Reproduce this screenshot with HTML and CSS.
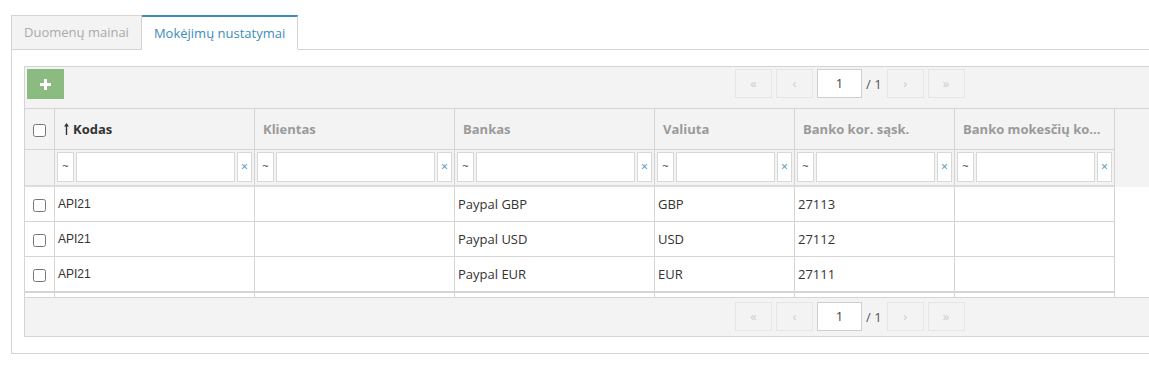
FILE: index.html
```html
<!DOCTYPE html>
<html lang="lt">
<head>
  <meta charset="UTF-8" />
  <title>Mokėjimų nustatymai</title>
  <link rel="stylesheet" href="styles.css">
</head>
<body>
  <div class="page">
    <ul class="tabs">
      <li class="tab">Duomenų mainai</li>
      <li class="tab active">Mokėjimų nustatymai</li>
    </ul>

    <div class="panel">
      <div class="grid">
        <div class="toolbar">
          <button class="btn-add"><svg width="11" height="11" viewBox="0 0 11 11"><path d="M4 0h3v4h4v3H7v4H4V7H0V4h4z" fill="#fff"/></svg></button>
          <div class="pager">
            <span class="pg-btn">&laquo;</span>
            <span class="pg-btn">&lsaquo;</span>
            <span class="pg-input">1</span>
            <span class="pg-total">/ 1</span>
            <span class="pg-btn">&rsaquo;</span>
            <span class="pg-btn">&raquo;</span>
          </div>
        </div>

        <div class="grid-head">
          <table class="tbl">
            <colgroup>
              <col style="width:30px"><col style="width:200px"><col style="width:200px"><col style="width:200px">
              <col style="width:140px"><col style="width:160px"><col style="width:160px">
            </colgroup>
            <tr class="hdr">
              <th class="chk"><input type="checkbox"></th>
              <th class="sorted"><svg class="arrow" width="5" height="12" viewBox="0 0 5 12"><path d="M2.5 0L5 3.5H3.2V12H1.8V3.5H0z" fill="#333"/></svg>Kodas</th>
              <th>Klientas</th>
              <th>Bankas</th>
              <th>Valiuta</th>
              <th>Banko kor. sąsk.</th>
              <th>Banko mokesčių ko...</th>
            </tr>
            <tr class="flt">
              <td class="chk"></td>
              <td><div class="fbox"><span class="fop">~</span><span class="finp"></span><span class="fclr">&times;</span></div></td>
              <td><div class="fbox"><span class="fop">~</span><span class="finp"></span><span class="fclr">&times;</span></div></td>
              <td><div class="fbox"><span class="fop">~</span><span class="finp"></span><span class="fclr">&times;</span></div></td>
              <td><div class="fbox"><span class="fop">~</span><span class="finp"></span><span class="fclr">&times;</span></div></td>
              <td><div class="fbox"><span class="fop">~</span><span class="finp"></span><span class="fclr">&times;</span></div></td>
              <td><div class="fbox"><span class="fop">~</span><span class="finp"></span><span class="fclr">&times;</span></div></td>
            </tr>
          </table>
        </div>

        <table class="tbl body">
          <colgroup>
            <col style="width:30px"><col style="width:200px"><col style="width:200px"><col style="width:200px">
            <col style="width:140px"><col style="width:160px"><col style="width:160px">
          </colgroup>
          <tr>
            <td class="chk"><input type="checkbox"></td>
            <td class="code">API21</td><td></td><td>Paypal GBP</td><td>GBP</td><td>27113</td><td></td>
          </tr>
          <tr>
            <td class="chk"><input type="checkbox"></td>
            <td class="code">API21</td><td></td><td>Paypal USD</td><td>USD</td><td>27112</td><td></td>
          </tr>
          <tr class="last">
            <td class="chk"><input type="checkbox"></td>
            <td class="code">API21</td><td></td><td>Paypal EUR</td><td>EUR</td><td>27111</td><td></td>
          </tr>
          <tr class="spacer">
            <td></td><td></td><td></td><td></td><td></td><td></td><td></td>
          </tr>
        </table>

        <div class="footer">
          <div class="pager">
            <span class="pg-btn">&laquo;</span>
            <span class="pg-btn">&lsaquo;</span>
            <span class="pg-input">1</span>
            <span class="pg-total">/ 1</span>
            <span class="pg-btn">&rsaquo;</span>
            <span class="pg-btn">&raquo;</span>
          </div>
        </div>
      </div>
    </div>
  </div>
</body>
</html>
```

FILE: styles.css
```css
body {margin:0; overflow:hidden; background:#fff; font-family:"Open Sans", sans-serif; font-size:13px; color:#333}
.page {padding:15px 0 0 11px; width:1200px}

.tabs {list-style:none; margin:0 0 -1px 0; padding:0; display:flex; position:relative; z-index:1}
.tab {height:33px; line-height:33px; padding:0 12px; border:1px solid #d4d4d4; background:#f3f3f3; color:#aaa}
.tab.active {background:#fff; color:#3c8dbc; border-top:2px solid #3c8dbc; height:32px; line-height:32px; border-left:none; border-bottom-color:#fff}

.panel {border:1px solid #d4d4d4; padding:16px 0 16px 12px}
.grid {border:1px solid #d4d4d4; border-right:none; background:#fff}

.toolbar {background:#f3f3f3; height:42px; padding:2px; display:flex; align-items:flex-start; border-bottom:1px solid #d4d4d4; box-sizing:border-box}
.btn-add {width:37px; height:30px; border:none; background:#8cbb82; padding:0; margin-right:671px; display:flex; align-items:center; justify-content:center}

.pager {display:flex; align-items:center; gap:4px}
.pg-btn {width:35px; height:27px; border:1px solid #e6e6e6; background:#f3f3f3; color:#cdcdcd; text-align:center; line-height:26px; font-size:13px}
.pg-input {width:43px; height:27px; border:1px solid #cfcfcf; background:#fff; text-align:center; line-height:27px; color:#444}
.pg-total {color:#555; margin-right:1px}

.grid-head {background:#f3f3f3}
.tbl {border-collapse:separate; border-spacing:0; table-layout:fixed; width:1090px}
.tbl th, .tbl td {border-right:1px solid #d4d4d4; box-sizing:border-box; padding:0; text-align:left; overflow:hidden; white-space:nowrap}
.tbl input[type=checkbox] {margin:0; width:13px; height:13px; vertical-align:middle}
.chk {text-align:center !important}

.hdr th {height:41px; border-bottom:1px solid #d4d4d4; padding-left:8px; color:#9a9a9a; font-weight:bold; font-size:13px; background:#f3f3f3}
.hdr th.chk {padding-left:0}
.hdr th.sorted {color:#333}
.arrow {vertical-align:-1px; margin:0 4px 0 1px}

.flt td {height:37px; border-bottom:2px solid #dcdcdc; padding:2px 2px 3px 2px; vertical-align:top; background:#f3f3f3}
.fbox {display:flex; gap:2px; height:30px}
.fop, .fclr, .finp {border:1px solid #d8d8d8; background:#fff; box-sizing:border-box; height:30px}
.fop {width:17px; text-align:center; line-height:26px; font-size:11px; color:#333}
.finp {flex:1}
.fclr {width:15px; text-align:center; line-height:28px; font-size:12px; color:#3c8dbc}

.body td {height:35px; border-bottom:1px solid #d4d4d4; padding-left:3px; font-size:13px; color:#333}
.body td.chk {padding-left:0}
.body td.code {font-family:"Liberation Sans", Arial, sans-serif; font-size:12px}
.body tr.last td {height:36px; border-bottom:2px solid #d4d4d4}
.body tr.spacer td {height:4px; border-bottom:none}

.footer {background:#f3f3f3; border-top:1px solid #d4d4d4; height:39px; box-sizing:border-box; padding:4px 0 0 710px}
```
